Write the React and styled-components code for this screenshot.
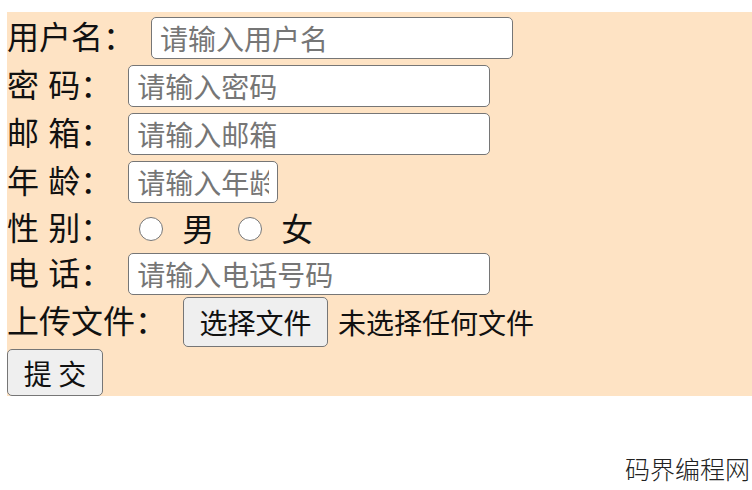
import React from "react";
import styled, { createGlobalStyle } from "styled-components";

const GlobalStyle = createGlobalStyle`
  html, body {
    margin: 0;
    padding: 0;
    background: #fff;
    font-family: "Noto Sans CJK SC", "Noto Sans", sans-serif;
    color: #111;
  }
`;

const Page = styled.div`
  position: relative;
  min-height: 100vh;
  overflow: hidden;
`;

const Form = styled.form`
  margin: 12px 0 0 7px;
  padding-top: 2px;
  background: #fee3c4;
  display: flex;
  flex-direction: column;
`;

const Row = styled.div`
  display: flex;
  align-items: center;
  height: ${({ h }) => h || 48}px;
  margin-top: ${({ mt }) => mt || 0}px;
`;

const Label = styled.span`
  font-size: 32px;
  line-height: 1;
  white-space: pre;
  word-spacing: 2px;
  margin-right: 16px;
  margin-top: -6px;
`;

const TextInput = styled.input`
  box-sizing: border-box;
  width: ${({ w }) => w || 362}px;
  height: 42px;
  padding: 0 8px;
  font-family: inherit;
  font-size: 28px;
  color: #111;
  background: #fff;
  border: 1.5px solid #767676;
  border-radius: 5px;
  outline: none;

  &::placeholder {
    color: #767676;
  }
`;

const Radio = styled.input.attrs({ type: "radio" })`
  appearance: none;
  box-sizing: border-box;
  width: 24px;
  height: 24px;
  margin: 0 0 0 ${({ ml }) => ml}px;
  border: 1.5px solid #767676;
  border-radius: 50%;
  background: #fff;
`;

const RadioText = styled.span`
  font-size: 32px;
  line-height: 1;
  margin: -4px 24px 0 19px;
`;

const Button = styled.button`
  box-sizing: border-box;
  width: ${({ w }) => w}px;
  height: ${({ h }) => h}px;
  padding: 0;
  font-family: inherit;
  font-size: 28px;
  color: #111;
  background: #efefef;
  border: 1.5px solid #767676;
  border-radius: 5px;
  white-space: pre;
`;

const FileStatus = styled.span`
  font-size: 28px;
  margin-left: 10px;
`;

const Watermark = styled.div`
  position: absolute;
  right: 2px;
  bottom: 4px;
  font-size: 25px;
  font-weight: 300;
  color: #222;
`;

export default function App() {
  return (
    <Page>
      <GlobalStyle />
      <Form onSubmit={(e) => e.preventDefault()}>
        <Row>
          <Label>用户名：</Label>
          <TextInput placeholder="请输入用户名" />
        </Row>
        <Row>
          <Label>密 码：</Label>
          <TextInput type="password" placeholder="请输入密码" />
        </Row>
        <Row>
          <Label>邮 箱：</Label>
          <TextInput placeholder="请输入邮箱" />
        </Row>
        <Row>
          <Label>年 龄：</Label>
          <TextInput w={150} placeholder="请输入年龄" />
        </Row>
        <Row h={45}>
          <Label>性 别：</Label>
          <Radio name="sex" ml={11} />
          <RadioText>男</RadioText>
          <Radio name="sex" ml={0} />
          <RadioText>女</RadioText>
        </Row>
        <Row h={46}>
          <Label>电 话：</Label>
          <TextInput placeholder="请输入电话号码" />
        </Row>
        <Row h={50}>
          <Label>上传文件：</Label>
          <Button type="button" w={145} h={50}>
            选择文件
          </Button>
          <FileStatus>未选择任何文件</FileStatus>
        </Row>
        <Row h={47} mt={2}>
          <Button type="submit" w={96} h={47}>
            提 交
          </Button>
        </Row>
      </Form>
      <Watermark>码界编程网</Watermark>
    </Page>
  );
}
